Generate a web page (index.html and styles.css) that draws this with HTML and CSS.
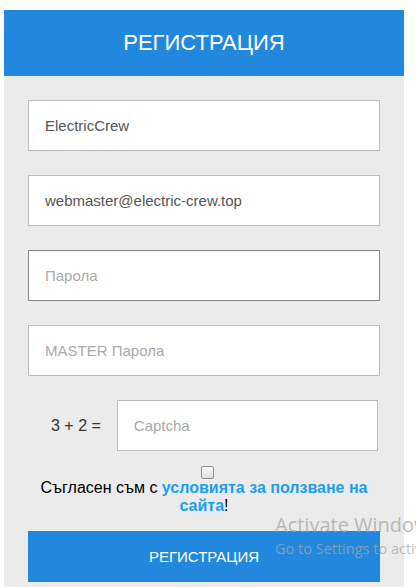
FILE: index.html
```html
<!DOCTYPE html>
<html lang="bg">
<head>
<meta charset="utf-8">
<title>Регистрация</title>
<link rel="stylesheet" href="styles.css">
</head>
<body>
<div class="card">
  <div class="card-header">РЕГИСТРАЦИЯ</div>
  <form class="card-body">
    <input class="field" type="text" value="ElectricCrew">
    <input class="field" type="email" value="webmaster@electric-crew.top">
    <input class="field field-hover" type="password" placeholder="Парола">
    <input class="field" type="password" placeholder="MASTER Парола">
    <div class="captcha-row">
      <span class="captcha-label">3 + 2 =</span>
      <input class="field captcha-field" type="text" placeholder="Captcha">
    </div>
    <div class="agree">
      <input class="check" type="checkbox">
      <p class="agree-text">Съгласен съм с <a class="agree-link" href="#">условията за ползване на сайта</a>!</p>
    </div>
    <button class="submit" type="button">РЕГИСТРАЦИЯ</button>
  </form>
</div>
<div class="watermark">
  <div class="wm-title">Activate Windows</div>
  <div class="wm-sub">Go to Settings to activate Windows.</div>
</div>
</body>
</html>
```
FILE: styles.css
```css
html, body {
  margin: 0;
  padding: 0;
  background: #ffffff;
  overflow: hidden;
}
body {
  font-family: "Liberation Sans", Arial, sans-serif;
  width: 416px;
  height: 588px;
  position: relative;
}
.card {
  width: 400px;
  margin: 10px 0 0 4px;
}
.card-header {
  background: #2288dd;
  color: #ffffff;
  height: 66px;
  display: flex;
  align-items: center;
  justify-content: center;
  font-size: 22px;
}
.card-body {
  background: #ebebeb;
  padding: 24px 24px 5px;
  display: flex;
  flex-direction: column;
  margin: 0;
}
.field {
  box-sizing: border-box;
  width: 352px;
  height: 51px;
  margin: 0 0 24px 0;
  padding: 0 16px;
  border: 1px solid #bdbdbd;
  background: #ffffff;
  font-family: "Liberation Sans", Arial, sans-serif;
  font-size: 15px;
  color: #555555;
  outline: none;
}
.field::placeholder {
  color: #a9a9a9;
}
.field-hover {
  border-color: #858585;
}
.captcha-row {
  display: flex;
  align-items: center;
  margin: 0 0 15px 0;
  padding-left: 23px;
}
.captcha-label {
  font-size: 16px;
  color: #333333;
  margin-right: 16px;
}
.captcha-field {
  width: 261px;
  margin: 0;
}
.agree {
  display: flex;
  flex-direction: column;
  align-items: center;
}
.check {
  -webkit-appearance: none;
  appearance: none;
  box-sizing: border-box;
  width: 13px;
  height: 13px;
  margin: 0 0 0 6px;
  border: 1px solid #8f8f8f;
  border-radius: 2px;
  background: linear-gradient(#fafafa, #dedede);
}
.agree-text {
  margin: 0;
  font-size: 16px;
  line-height: 18px;
  color: #000000;
  text-align: center;
  width: 352px;
}
.agree-link {
  color: #1a9ff0;
  font-weight: bold;
  text-decoration: none;
}
.submit {
  margin-top: 16px;
  height: 51px;
  width: 352px;
  border: none;
  background: #2288dd;
  color: #ffffff;
  font-family: "Liberation Sans", Arial, sans-serif;
  font-size: 15px;
  padding: 0;
}
.watermark {
  position: absolute;
  left: 275px;
  top: 512px;
  white-space: nowrap;
  font-family: "Open Sans", "Noto Sans", sans-serif;
  color: rgba(165, 165, 165, 0.75);
  pointer-events: none;
}
.wm-title {
  font-size: 20px;
  line-height: 26px;
}
.wm-sub {
  font-size: 14.5px;
  line-height: 21px;
}
```
